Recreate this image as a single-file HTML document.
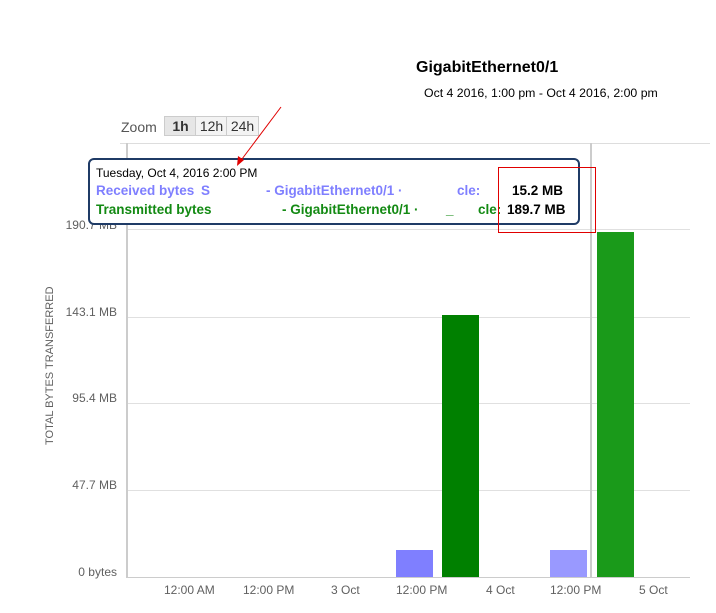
<!DOCTYPE html>
<html><head><meta charset="utf-8"><style>
body{margin:0;width:716px;height:613px;background:#fff;position:relative;overflow:hidden;font-family:"Liberation Sans",Arial,sans-serif;}
.a{position:absolute;white-space:nowrap;}
.gl{position:absolute;left:127px;width:563px;height:1px;background:#e0e0e0;}
.yl{position:absolute;right:599px;font-size:12px;color:#606060;}
.xl{position:absolute;font-size:12px;color:#606060;top:583px;}
.bar{position:absolute;}
.r{position:absolute;top:183px;font-size:13.5px;font-weight:bold;color:#7f7fff;white-space:nowrap}
.t{position:absolute;top:202px;font-size:13.5px;font-weight:bold;color:#138a13;white-space:nowrap}
</style></head><body>
<div class="a" style="left:416px;top:59px;font-size:16px;font-weight:bold;color:#000">GigabitEthernet0/1</div>
<div class="a" style="left:424px;top:86px;font-size:12.3px;color:#000">Oct 4 2016, 1:00 pm - Oct 4 2016, 2:00 pm</div>

<div class="a" style="left:121px;top:119px;font-size:14px;color:#555">Zoom</div>
<div class="a" style="left:164px;top:116px;width:31px;height:18px;background:#e6e6e6;border:1px solid #ccc;font-size:14px;font-weight:bold;color:#333;text-align:center;line-height:18px">1h</div>
<div class="a" style="left:195px;top:116px;width:31px;height:18px;background:#f3f3f3;border:1px solid #ccc;font-size:14px;color:#333;text-align:center;line-height:18px">12h</div>
<div class="a" style="left:226px;top:116px;width:31px;height:18px;background:#f3f3f3;border:1px solid #ccc;font-size:14px;color:#333;text-align:center;line-height:18px">24h</div>

<div class="a" style="left:120px;top:143px;width:590px;height:1px;background:#ddd"></div>
<div class="gl" style="top:229px"></div>
<div class="gl" style="top:317px"></div>
<div class="gl" style="top:403px"></div>
<div class="gl" style="top:490px"></div>
<div class="a" style="left:127px;top:577px;width:563px;height:1px;background:#ccc"></div>
<div class="a" style="left:126px;top:143px;width:2px;height:435px;background:#ccc"></div>
<div class="a" style="left:590px;top:143px;width:2px;height:435px;background:#ccc"></div>

<div class="yl" style="top:218px">190.7 MB</div>
<div class="yl" style="top:305px">143.1 MB</div>
<div class="yl" style="top:391px">95.4 MB</div>
<div class="yl" style="top:478px">47.7 MB</div>
<div class="yl" style="top:565px">0 bytes</div>
<div class="a" style="left:44px;top:445px;font-size:11px;color:#606060;transform:rotate(-90deg);transform-origin:0 0">TOTAL BYTES TRANSFERRED</div>

<div class="bar" style="left:396px;top:550px;width:37px;height:27px;background:#7f7fff"></div>
<div class="bar" style="left:442px;top:315px;width:37px;height:262px;background:#008000"></div>
<div class="bar" style="left:550px;top:550px;width:37px;height:27px;background:#9999ff"></div>
<div class="bar" style="left:597px;top:232px;width:37px;height:345px;background:#1a9a1a"></div>

<div class="xl" style="left:164px">12:00 AM</div>
<div class="xl" style="left:243px">12:00 PM</div>
<div class="xl" style="left:331px">3 Oct</div>
<div class="xl" style="left:396px">12:00 PM</div>
<div class="xl" style="left:486px">4 Oct</div>
<div class="xl" style="left:550px">12:00 PM</div>
<div class="xl" style="left:639px">5 Oct</div>

<div class="a" style="left:88px;top:158px;width:488px;height:63px;border:2px solid #1f3b66;border-radius:6px;background:#fff"></div>
<div class="a" style="left:96px;top:166px;font-size:12px;color:#000">Tuesday, Oct 4, 2016 2:00 PM</div>
<div class="r" style="left:96px">Received bytes</div>
<div class="r" style="left:201px">S</div>
<div class="r" style="left:266px">- GigabitEthernet0/1 ·</div>
<div class="r" style="left:457px">cle:</div>
<div class="t" style="left:96px">Transmitted bytes</div>
<div class="t" style="left:282px">- GigabitEthernet0/1 ·</div>
<div class="t" style="left:446px">_</div>
<div class="t" style="left:478px">cle:</div>
<div class="a" style="left:512px;top:183px;font-size:13.5px;font-weight:bold;color:#000">15.2 MB</div>
<div class="a" style="left:507px;top:202px;font-size:13.5px;font-weight:bold;color:#000">189.7 MB</div>
<div class="a" style="left:498px;top:167px;width:96px;height:64px;border:1px solid #e00000"></div>

<svg class="a" style="left:0;top:0" width="716" height="613">
<line x1="281" y1="107" x2="239" y2="163" stroke="#e00000" stroke-width="1"/>
<polygon points="237,166 238,156 244,160" fill="#e00000"/>
</svg>
</body></html>
